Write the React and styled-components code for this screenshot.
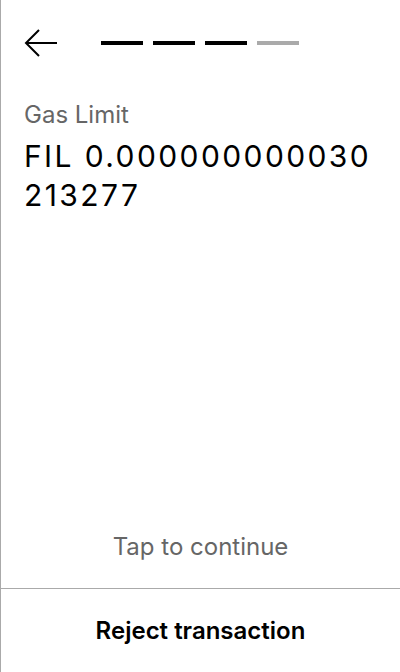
import React from "react";
import styled, { createGlobalStyle } from "styled-components";

const Global = createGlobalStyle`
  html, body {
    margin: 0;
    padding: 0;
    background: #fff;
  }
  body {
    font-family: Inter, "Noto Sans", sans-serif;
    -webkit-font-smoothing: antialiased;
  }
`;

const Screen = styled.div`
  box-sizing: border-box;
  width: 400px;
  height: 672px;
  display: flex;
  flex-direction: column;
  border-left: 1px solid #aaaaaa;
  color: #000;
`;

const Header = styled.div`
  display: flex;
  align-items: center;
  gap: 43px;
  padding: 29px 24px 0 23px;
  height: 28px;
`;

const BackButton = styled.button`
  display: flex;
  padding: 0;
  border: none;
  background: none;
  cursor: pointer;
`;

const Steps = styled.div`
  display: flex;
  gap: 10px;
`;

const Step = styled.div`
  width: 42px;
  height: 4px;
  background: ${(p) => (p.done ? "#000" : "#aaaaaa")};
`;

const Body = styled.div`
  flex: 1;
  padding: 42px 24px 0 23px;
`;

const Label = styled.div`
  font-size: 24px;
  line-height: 32px;
  color: #666666;
`;

const Value = styled.div`
  margin-top: 6px;
  font-size: 30px;
  line-height: 39px;
  letter-spacing: 2.4px;
  word-break: break-all;
`;

const Hint = styled.div`
  text-align: center;
  font-size: 24px;
  line-height: 32px;
  color: #666666;
  padding-bottom: 25px;
`;

const Footer = styled.button`
  height: 84px;
  border: none;
  border-top: 1px solid #aaaaaa;
  background: none;
  font-family: inherit;
  font-size: 24px;
  font-weight: 600;
  color: #000;
  padding: 0;
  cursor: pointer;
`;

const ArrowLeft = () => (
  <svg width="34" height="28" viewBox="0 0 34 28" fill="none">
    <path d="M2 14H33" stroke="#000" strokeWidth="2" />
    <path d="M15 1L2 14L15 27" stroke="#000" strokeWidth="2" />
  </svg>
);

const steps = [true, true, true, false];

export default function App() {
  return (
    <>
      <Global />
      <Screen>
        <Header>
          <BackButton>
            <ArrowLeft />
          </BackButton>
          <Steps>
            {steps.map((done, i) => (
              <Step key={i} done={done} />
            ))}
          </Steps>
        </Header>
        <Body>
          <Label>Gas Limit</Label>
          <Value>FIL 0.000000000030213277</Value>
        </Body>
        <Hint>Tap to continue</Hint>
        <Footer>Reject transaction</Footer>
      </Screen>
    </>
  );
}
